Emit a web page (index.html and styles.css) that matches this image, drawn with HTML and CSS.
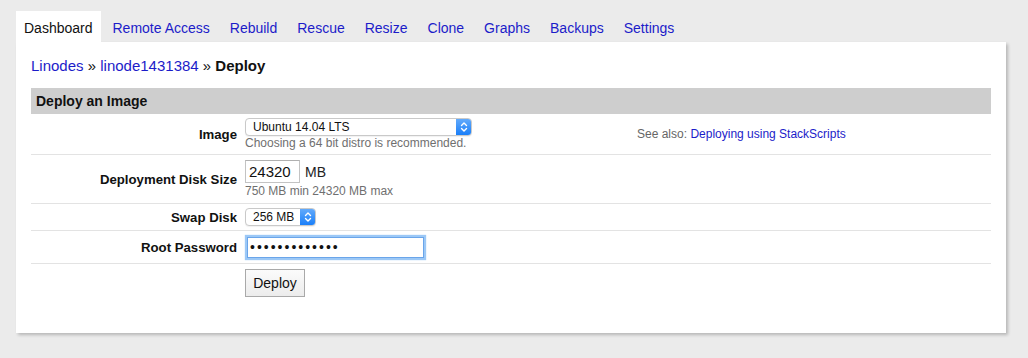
FILE: index.html
```html
<!DOCTYPE html>
<html>
<head>
<meta charset="utf-8">
<link rel="stylesheet" href="styles.css">
</head>
<body>
<nav class="tabs">
  <a class="tab active">Dashboard</a>
  <a class="tab">Remote Access</a>
  <a class="tab">Rebuild</a>
  <a class="tab">Rescue</a>
  <a class="tab">Resize</a>
  <a class="tab">Clone</a>
  <a class="tab">Graphs</a>
  <a class="tab">Backups</a>
  <a class="tab">Settings</a>
</nav>
<main class="panel">
  <div class="crumbs"><a class="link">Linodes</a> » <a class="link">linode1431384</a> » <b>Deploy</b></div>
  <section class="form">
    <h2 class="form-head">Deploy an Image</h2>
    <div class="row row-image">
      <label class="label">Image</label>
      <div class="control">
        <div class="select select-wide">
          <span class="select-text">Ubuntu 14.04 LTS</span>
          <span class="select-arrow"><svg width="8" height="12" viewBox="0 0 8 12"><path d="M1.5 4.5 L4 2 L6.5 4.5 M1.5 7.5 L4 10 L6.5 7.5" fill="none" stroke="#fff" stroke-width="1.4" stroke-linecap="round" stroke-linejoin="round"/></svg></span>
        </div>
        <div class="hint">Choosing a 64 bit distro is recommended.</div>
      </div>
      <div class="aside">See also: <a class="link">Deploying using StackScripts</a></div>
    </div>
    <div class="row row-disk">
      <label class="label">Deployment Disk Size</label>
      <div class="control">
        <div class="inline"><span class="input input-size">24320</span><span class="unit">MB</span></div>
        <div class="hint">750 MB min 24320 MB max</div>
      </div>
    </div>
    <div class="row row-swap">
      <label class="label">Swap Disk</label>
      <div class="control">
        <div class="select select-small">
          <span class="select-text">256 MB</span>
          <span class="select-arrow"><svg width="8" height="12" viewBox="0 0 8 12"><path d="M1.5 4.5 L4 2 L6.5 4.5 M1.5 7.5 L4 10 L6.5 7.5" fill="none" stroke="#fff" stroke-width="1.4" stroke-linecap="round" stroke-linejoin="round"/></svg></span>
        </div>
      </div>
    </div>
    <div class="row row-pass">
      <label class="label">Root Password</label>
      <div class="control">
        <span class="input input-pass">•••••••••••••</span>
      </div>
    </div>
    <div class="row row-submit">
      <span class="label"></span>
      <div class="control"><button class="button">Deploy</button></div>
    </div>
  </section>
</main>
</body>
</html>
```
FILE: styles.css
```css
* { box-sizing: border-box; }
html, body { margin: 0; padding: 0; }
body {
  background: #ebebeb;
  font-family: "Liberation Sans", Arial, Helvetica, sans-serif;
  color: #000;
  height: 358px;
  overflow: hidden;
}
.link { color: #1c1cc9; text-decoration: none; cursor: pointer; }

.tabs {
  display: flex;
  gap: 4px;
  padding: 11px 0 0 16px;
  height: 42px;
}
.tab {
  display: block;
  height: 31px;
  line-height: 34px;
  padding: 0 8px;
  font-size: 14px;
  color: #1c1cc9;
}
.tab.active { background: #fff; color: #111; }

.panel {
  margin-left: 16px;
  width: 990px;
  height: 291px;
  background: #fff;
  padding: 15px 15px 0 15px;
  box-shadow: 2px 2px 3px rgba(0, 0, 0, 0.22);
}
.crumbs {
  font-size: 15px;
  line-height: 17px;
  color: #111;
  margin-bottom: 14px;
}
.crumbs b { font-weight: bold; }

.form-head {
  margin: 0;
  height: 26px;
  line-height: 26px;
  background: #cecece;
  padding-left: 5px;
  font-size: 14px;
  font-weight: bold;
  color: #111;
}
.row {
  display: grid;
  grid-template-columns: 206px 384px 1fr;
  column-gap: 8px;
  align-items: center;
  padding: 4px 0;
  border-bottom: 1px solid #e3e3e3;
}
.row-submit { border-bottom: none; padding-top: 5px; }
.row-pass { padding: 5px 0 4px; }
.label {
  text-align: right;
  font-size: 13.2px;
  font-weight: bold;
  color: #111;
}
.control { display: flex; flex-direction: column; align-items: flex-start; }
.aside { font-size: 12px; color: #666; }

.hint {
  font-size: 12px;
  line-height: 14px;
  color: #6f6f6f;
}
.row-disk .hint { margin-top: 1px; line-height: 15px; }
.row-disk .control { padding-top: 1px; }

.select {
  display: flex;
  align-items: stretch;
  height: 18px;
  border: 1px solid #c9c9c9;
  border-radius: 4px;
  background: #fff;
  box-shadow: 0 1px 1px rgba(0,0,0,0.06);
  overflow: hidden;
}
.select-wide { width: 227px; }
.select-small { width: 71px; }
.select-text {
  flex: 1;
  font-size: 12px;
  line-height: 16px;
  padding-left: 7px;
  color: #111;
}
.select-arrow {
  width: 15px;
  display: flex;
  align-items: center;
  justify-content: center;
  background: linear-gradient(#62aafb, #1a7ff9);
}

.inline { display: flex; align-items: center; }
.input {
  display: block;
  border: 1px solid #c3c3c3;
  background: #fff;
  color: #111;
}
.input-size {
  width: 55px;
  height: 23px;
  font-size: 15px;
  line-height: 21px;
  padding-left: 3px;
  border-top-color: #b0b0b0;
}
.unit { font-size: 14px; margin-left: 5px; color: #222; }
.input-pass {
  width: 177px;
  height: 21px;
  margin: 1px 2px;
  border: 1px solid #6aa5ea;
  box-shadow: 0 0 1px 2px #9cc8f6;
  font-size: 14px;
  line-height: 19px;
  letter-spacing: 2px;
  padding-left: 2px;
}
.button {
  width: 60px;
  height: 28px;
  border: 1px solid #a9a9a9;
  background: linear-gradient(#fbfbfb, #ececec);
  font-family: "Liberation Sans", Arial, sans-serif;
  font-size: 14px;
  color: #111;
  padding: 0;
  border-radius: 0;
}
```
